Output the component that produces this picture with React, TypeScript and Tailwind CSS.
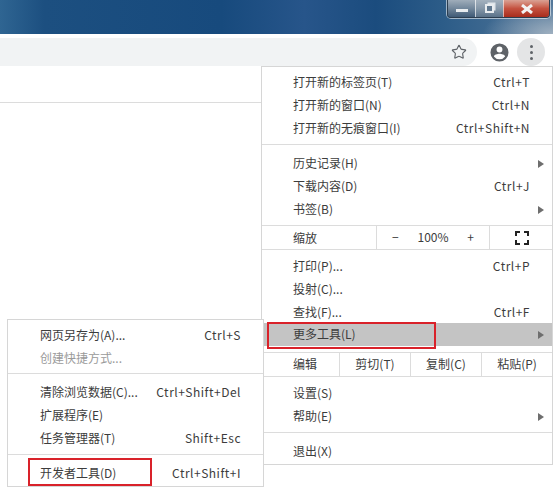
import { Star } from "lucide-react";

const font = "font-['Noto_Sans_CJK_SC','Noto_Sans',sans-serif]";

function Arrow() {
  return <span className="absolute right-[8px] top-1/2 -mt-[4px] h-0 w-0 border-y-[4px] border-l-[6px] border-y-transparent border-l-[#6e6e6e]" />;
}

function Row({
  label,
  keys,
  arrow,
  muted,
  active,
  className = "",
}: {
  label: string;
  keys?: string;
  arrow?: boolean;
  muted?: boolean;
  active?: boolean;
  className?: string;
}) {
  return (
    <div
      className={`relative flex h-[23px] items-center justify-between pb-[2px] pl-[31px] pr-[22px] ${active ? "bg-[#c4c4c4]" : ""} ${muted ? "text-[#9a9a9a]" : ""} ${className}`}
    >
      <span>{label}</span>
      {keys && <span className="tracking-[0.5px]">{keys}</span>}
      {arrow && <Arrow />}
    </div>
  );
}

function Sep({ className = "" }: { className?: string }) {
  return <div className={`h-px bg-[#dcdcdc] ${className}`} />;
}

function WindowButtons() {
  return (
    <div className="absolute right-[3px] top-0 flex h-[18px] w-[103px] overflow-hidden rounded-b-[4px] border border-t-0 border-[#2c3e50] shadow-[0_0_0_1px_rgba(255,255,255,0.55)]">
      <div className="flex w-[28px] items-center justify-center border-r border-white/70 bg-gradient-to-b from-[#9fadba] via-[#72879b] to-[#3f5a76]">
        <div className="mt-[4px] h-[3px] w-[12px] bg-[#e8ecef]" />
      </div>
      <div className="flex w-[27px] items-center justify-center bg-gradient-to-b from-[#a3b1be] via-[#8597a8] to-[#5a7289]">
        <div className="relative h-[9px] w-[9px] border-[2px] border-[#e8ecef] bg-[#60788f] shadow-[2px_-2px_0_-0.5px_#dfe5ea]" />
      </div>
      <div className="flex flex-1 items-center justify-center border-l border-white/60 bg-gradient-to-b from-[#d9a194] via-[#c4513f] to-[#a82c1c]">
        <svg viewBox="0 0 14 10" className="h-[10px] w-[14px]">
          <path d="M2 1l10 8M12 1L2 9" stroke="#f2f2f2" strokeWidth="3" fill="none" />
        </svg>
      </div>
    </div>
  );
}

function Toolbar() {
  return (
    <div className="relative h-[32px] bg-white">
      <div className="flex h-full pt-[4px]">
        <div className="flex h-[28px] w-[477px] items-center justify-end rounded-r-[14px] bg-[#f1f3f4] pr-[10px]">
          <Star size={16} strokeWidth={1.7} className="text-[#5f6368]" />
        </div>
        <div className="ml-[12px] flex h-[28px] w-[20px] items-center justify-center">
          <svg viewBox="0 0 20 20" className="h-[19px] w-[19px]">
            <path
              fill="#5f6368"
              d="M10 .5a9.5 9.5 0 1 0 0 19 9.5 9.5 0 0 0 0-19zm0 3.2a3.1 3.1 0 1 1 0 6.2 3.1 3.1 0 0 1 0-6.2zm0 13.5a7.3 7.3 0 0 1-5.9-3c.1-2 3.9-3 5.9-3s5.8 1 5.9 3a7.3 7.3 0 0 1-5.9 3z"
            />
          </svg>
        </div>
        <div className="ml-[8px] flex h-[28px] w-[28px] flex-col items-center justify-center gap-[3px] rounded-full bg-[#e4e5e6]">
          <span className="h-[3px] w-[3px] rounded-full bg-[#5f6368]" />
          <span className="h-[3px] w-[3px] rounded-full bg-[#5f6368]" />
          <span className="h-[3px] w-[3px] rounded-full bg-[#5f6368]" />
        </div>
      </div>
    </div>
  );
}

function MainMenu() {
  return (
    <div className="absolute left-[261px] top-[66px] h-[399px] w-[292px] border border-[#d6d6d6] bg-white">
      <div className="pt-[4px]">
        <Row label="打开新的标签页(T)" keys="Ctrl+T" />
        <Row label="打开新的窗口(N)" keys="Ctrl+N" />
        <Row label="打开新的无痕窗口(I)" keys="Ctrl+Shift+N" />
      </div>
      <Sep className="mt-[4px]" />
      <div className="pt-[7px]">
        <Row label="历史记录(H)" arrow />
        <Row label="下载内容(D)" keys="Ctrl+J" />
        <Row label="书签(B)" arrow />
      </div>
      <Sep className="mt-[4px]" />
      <div className="flex h-[23px] items-center">
        <div className="w-[114px] pl-[31px]">缩放</div>
        <div className="flex h-full w-[114px] items-center justify-between border-x border-[#dcdcdc] pb-[2px] pl-[15px] pr-[15px]">
          <span>−</span>
          <span>100%</span>
          <span>+</span>
        </div>
        <div className="flex flex-1 justify-center pl-[2px]">
          <svg viewBox="0 0 14 14" className="h-[14px] w-[14px]">
            <path d="M1 5V1h4M9 1h4v4M13 9v4H9M5 13H1V9" fill="none" stroke="#222" strokeWidth="2" />
          </svg>
        </div>
      </div>
      <Sep />
      <div className="pt-[5px]">
        <Row label="打印(P)..." keys="Ctrl+P" />
        <Row label="投射(C)..." />
        <Row label="查找(F)..." keys="Ctrl+F" />
        <Row label="更多工具(L)" arrow active className="-mt-px" />
      </div>
      <Sep className="mt-[6px]" />
      <div className="flex h-[23px] items-center text-center">
        <div className="w-[77px] pb-[2px] pl-[31px] text-left">编辑</div>
        <div className="h-full w-[71px] border-l border-[#dcdcdc] leading-[21px]">剪切(T)</div>
        <div className="h-full w-[71px] border-l border-[#dcdcdc] leading-[21px]">复制(C)</div>
        <div className="h-full flex-1 border-l border-[#dcdcdc] leading-[21px]">粘贴(P)</div>
      </div>
      <Sep />
      <div className="pt-[5px]">
        <Row label="设置(S)" />
        <Row label="帮助(E)" arrow />
      </div>
      <Sep className="mt-[4px]" />
      <Row label="退出(X)" className="mt-[7px]" />
    </div>
  );
}

function SubMenu() {
  return (
    <div className="absolute left-[7px] top-[319px] h-[168px] w-[257px] border border-[#d6d6d6] bg-white">
      <div className="pt-[4px]">
        <Row label="网页另存为(A)..." keys="Ctrl+S" className="!pl-[32px]" />
        <Row label="创建快捷方式..." muted className="!pl-[32px]" />
      </div>
      <Sep className="mt-[3px]" />
      <div className="pt-[7px]">
        <Row label="清除浏览数据(C)..." keys="Ctrl+Shift+Del" className="!pl-[32px]" />
        <Row label="扩展程序(E)" className="!pl-[32px]" />
        <Row label="任务管理器(T)" keys="Shift+Esc" className="!pl-[32px]" />
      </div>
      <Sep className="mt-[4px]" />
      <Row label="开发者工具(D)" keys="Ctrl+Shift+I" className="mt-[7px] !pl-[32px]" />
    </div>
  );
}

export default function App() {
  return (
    <div className={`relative h-[489px] w-[553px] overflow-hidden bg-white text-[12px] leading-none text-[#3c3c3c] ${font}`}>
      <div className="relative h-[34px] bg-[radial-gradient(ellipse_70px_30px_at_100%_100%,#9fb0c0_0%,rgba(159,176,192,0)_100%),linear-gradient(90deg,#2f6592_0%,#1c4f80_8%,#174a7d_40%,#27558a_55%,#1b4c7e_68%,#2c5c88_80%,#54789a_100%)]">
        <WindowButtons />
      </div>
      <Toolbar />
      <div className="mt-[36px] h-px bg-[#dcdcdc]" />
      <MainMenu />
      <SubMenu />
      <div className="absolute left-[267px] top-[322px] h-[27px] w-[169px] border-2 border-[#d9222a]" />
      <div className="absolute left-[28px] top-[458px] h-[28px] w-[124px] border-2 border-[#d9222a]" />
    </div>
  );
}
